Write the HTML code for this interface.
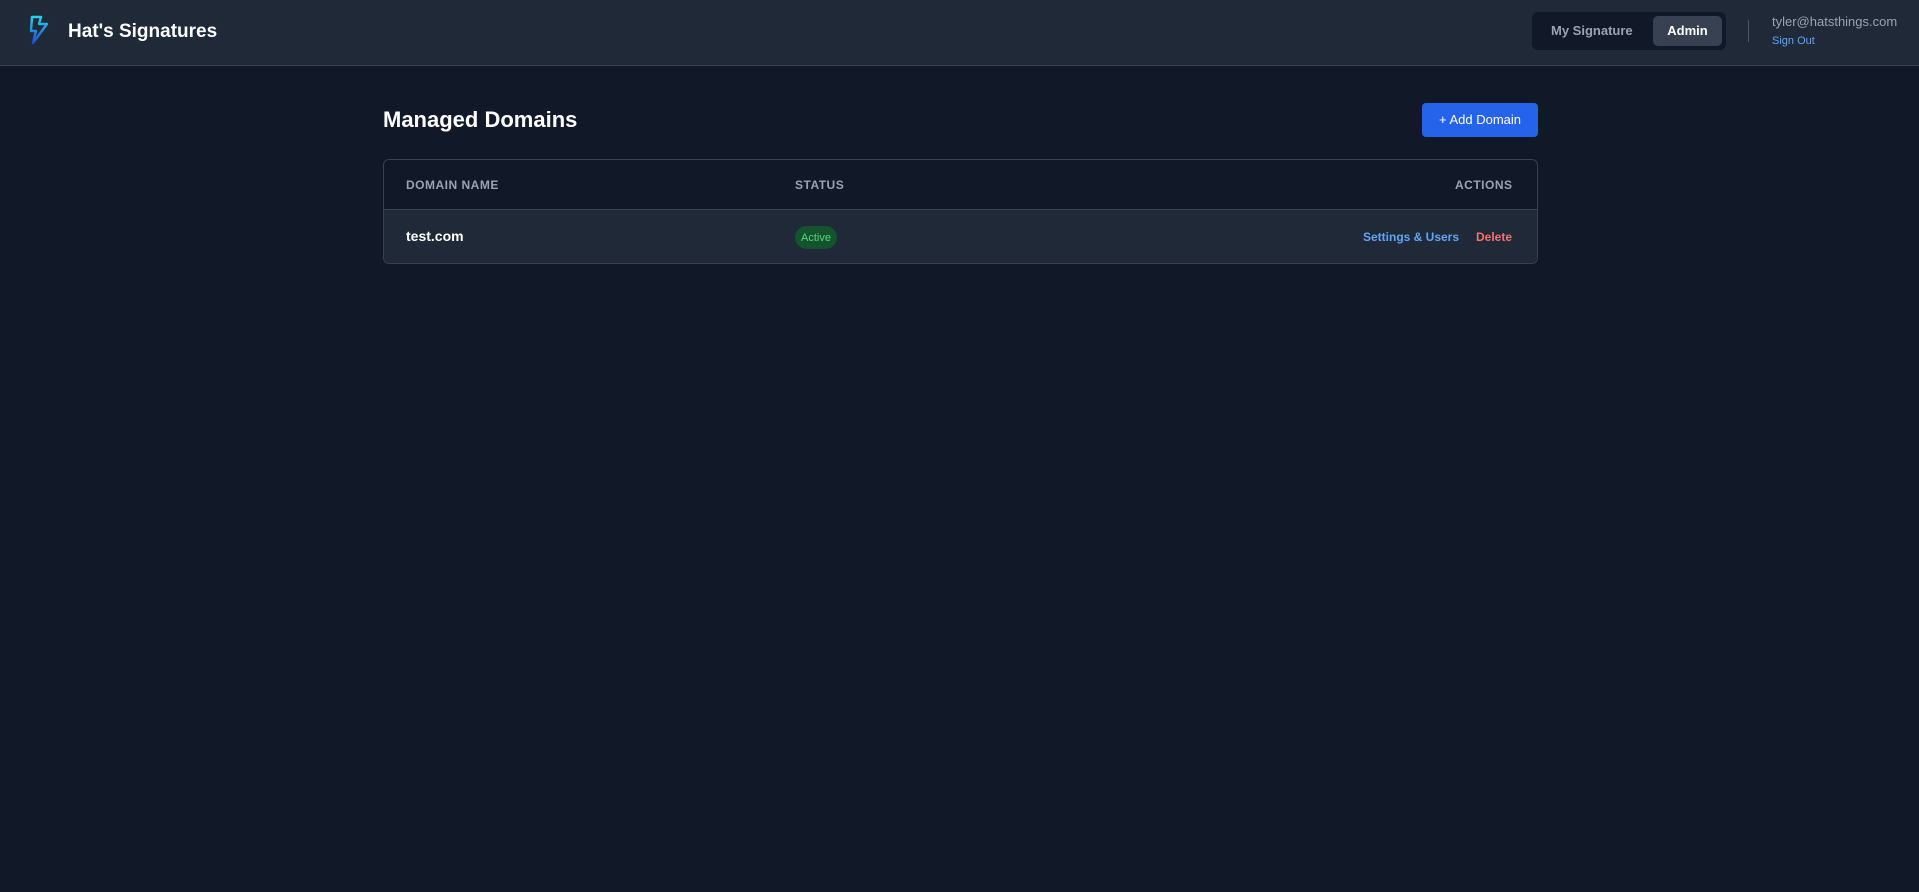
<!DOCTYPE html>
<html><head><meta charset="utf-8"><style>
*{box-sizing:border-box;margin:0;padding:0}
body{width:1919px;height:892px;background:#111827;font-family:"Liberation Sans",sans-serif;color:#fff;position:relative;overflow:hidden}
.hdr{position:absolute;left:0;top:0;width:1919px;height:66px;background:#1f2937;border-bottom:1px solid #374151}
.abs{position:absolute;white-space:nowrap}
</style></head><body>
<div class="hdr"></div>
<svg class="abs" style="left:28px;top:15px" width="22" height="30" viewBox="0 0 22 30">
<defs><linearGradient id="g" x1="0" y1="0" x2="0" y2="1"><stop offset="0" stop-color="#22d3ee"/><stop offset="1" stop-color="#1d4ed8"/></linearGradient></defs>
<path d="M4 2h9l-2 7h8L5 28l3-12H3z" fill="none" stroke="url(#g)" stroke-width="2.4" stroke-linejoin="round"/>
</svg>
<div class="abs" style="left:68px;top:21px;font-size:19px;font-weight:bold">Hat's Signatures</div>
<div class="abs" style="left:1532px;top:12px;width:194px;height:38px;background:#111827;border-radius:6px"></div>
<div class="abs" style="left:1551px;top:23px;font-size:13px;color:#9ca3af;font-weight:bold">My Signature</div>
<div class="abs" style="left:1653px;top:16px;width:69px;height:30px;background:#374151;border-radius:5px;font-size:13px;font-weight:bold;text-align:center;line-height:30px">Admin</div>
<div class="abs" style="left:1748px;top:20px;width:1px;height:22px;background:#4b5563"></div>
<div class="abs" style="left:1772px;top:14px;font-size:13px;color:#9ca3af">tyler@hatsthings.com</div>
<div class="abs" style="left:1772px;top:35px;font-size:11px;color:#60a5fa">Sign Out</div>
<div class="abs" style="left:383px;top:107px;font-size:22px;font-weight:bold">Managed Domains</div>
<div class="abs" style="left:1422px;top:103px;width:116px;height:34px;background:#2563eb;border-radius:4px;font-size:13px;text-align:center;line-height:34px">+ Add Domain</div>
<div class="abs" style="left:383px;top:159px;width:1155px;height:105px;border:1px solid #374151;border-radius:6px;overflow:hidden">
<div style="height:50px;border-bottom:1px solid #374151"></div>
<div style="height:54px;background:#1f2937"></div>
</div>
<div class="abs" style="left:406px;top:178px;font-size:12px;color:#9ca3af;letter-spacing:0.5px;font-weight:bold">DOMAIN NAME</div>
<div class="abs" style="left:795px;top:178px;font-size:12px;color:#9ca3af;letter-spacing:0.5px;font-weight:bold">STATUS</div>
<div class="abs" style="left:1455px;top:178px;font-size:12px;color:#9ca3af;letter-spacing:0.5px;font-weight:bold">ACTIONS</div>
<div class="abs" style="left:406px;top:228px;font-size:14px;font-weight:bold">test.com</div>
<div class="abs" style="left:795px;top:226px;width:42px;height:23px;background:#14532d;border-radius:12px;font-size:11px;color:#4ade80;text-align:center;line-height:24px">Active</div>
<div class="abs" style="left:1363px;top:230px;font-size:12px;color:#60a5fa;font-weight:bold">Settings &amp; Users</div>
<div class="abs" style="left:1476px;top:230px;font-size:12px;color:#f87171;font-weight:bold">Delete</div>
</body></html>
